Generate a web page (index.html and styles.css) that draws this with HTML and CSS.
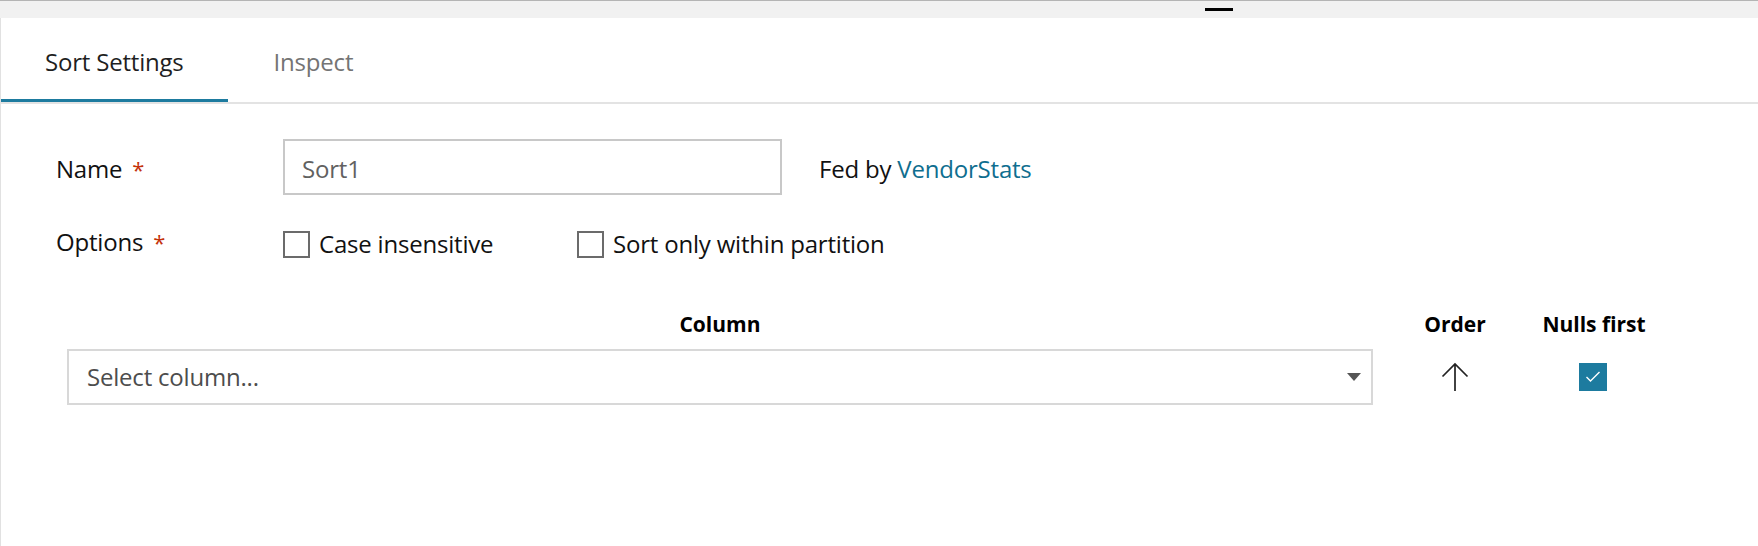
FILE: index.html
```html
<!DOCTYPE html>
<html lang="en">
<head>
<meta charset="utf-8">
<title>Sort Settings</title>
<link rel="stylesheet" href="styles.css">
</head>
<body>
<div class="page">
  <div class="topbar"><span class="handle"></span></div>
  <div class="main">
    <div class="tabs">
      <div class="tab active">Sort Settings</div>
      <div class="tab">Inspect</div>
    </div>
    <div class="form">
      <div class="row row-name">
        <div class="label">Name<span class="req">*</span></div>
        <div class="input">Sort1</div>
        <div class="fed">Fed by <span class="link">VendorStats</span></div>
      </div>
      <div class="row row-options">
        <div class="label label-options">Options<span class="req">*</span></div>
        <div class="options">
          <div class="opt opt-first"><span class="box"></span><span>Case insensitive</span></div>
          <div class="opt"><span class="box"></span><span>Sort only within partition</span></div>
        </div>
      </div>
      <div class="table">
        <div class="th">Column</div>
        <div class="th">Order</div>
        <div class="th">Nulls first</div>
        <div class="select">
          <span>Select column...</span>
          <svg class="caret" width="14" height="8" viewBox="0 0 14 8"><path d="M0 0 H14 L7 8 Z" fill="#555"/></svg>
        </div>
        <div class="cell">
          <svg width="28" height="30" viewBox="0 0 28 30"><path d="M14 29 V2 M1.5 14.5 L14 2 L26.5 14.5" fill="none" stroke="#222" stroke-width="1.7"/></svg>
        </div>
        <div class="cell">
          <span class="checked"><svg width="28" height="28" viewBox="0 0 28 28"><path d="M7.5 14 L11.5 18 L20.5 9" fill="none" stroke="#fff" stroke-width="1.4"/></svg></span>
        </div>
      </div>
    </div>
  </div>
</div>
</body>
</html>
```

FILE: styles.css
```css
* { box-sizing: border-box; }
html, body { margin: 0; padding: 0; background: #fff; }
body {
  font-family: "Open Sans", "Noto Sans", "Liberation Sans", sans-serif;
  color: #111;
  font-size: 24px;
  line-height: 32px;
  letter-spacing: -0.2px;
}
.page {
  width: 1758px;
  height: 546px;
  border-top: 1px solid #b4b4b4;
  display: flex;
  flex-direction: column;
}
.topbar {
  height: 17px;
  background: #f1f1f1;
  padding: 7px 0 0 1205px;
  display: flex;
  align-items: flex-start;
}
.handle {
  display: block;
  width: 28px;
  height: 3px;
  background: #000;
}
.main {
  flex: 1;
  border-left: 1px solid #e1e1e1;
}
.tabs {
  display: flex;
  border-bottom: 2px solid #e3e3e3;
}
.tab {
  padding: 28px 44px 21px 44px;
  border-bottom: 3px solid transparent;
  color: #747474;
}
.tab.active {
  color: #1f1f1f;
  border-bottom-color: #1d7b9f;
}
.tab + .tab { margin-left: 2px; }
.form {
  padding-left: 55px;
}
.row {
  display: flex;
}
.row-name {
  margin-top: 35px;
  align-items: baseline;
}
.label {
  width: 227px;
  flex: none;
  color: #111;
}
.req {
  color: #c4320a;
  font-size: 22px;
  margin-left: 10px;
}
.input {
  width: 499px;
  height: 56px;
  border: 2px solid #c8c8c8;
  padding: 12px 17px 8px 17px;
  color: #616161;
}
.fed {
  margin-left: 37px;
  color: #111;
}
.link {
  color: #0f6e8f;
}
.row-options {
  margin-top: 33px;
  align-items: flex-start;
}
.label-options {
  margin-top: -2px;
}
.options {
  display: flex;
}
.opt {
  display: flex;
  align-items: center;
  gap: 9px;
  color: #111;
}
.opt-first {
  width: 294px;
}
.box {
  width: 27px;
  height: 27px;
  border: 2px solid #6b6b6b;
  flex: none;
}
.table {
  margin-top: 50px;
  margin-left: 11px;
  display: grid;
  grid-template-columns: 1306px 164px 114px;
  row-gap: 11px;
}
.th {
  font-weight: 700;
  font-size: 21px;
  line-height: 28px;
  text-align: center;
  color: #000;
  letter-spacing: 0;
}
.select {
  height: 56px;
  border: 2px solid #d8d8d8;
  padding: 0 10px 0 18px;
  display: flex;
  align-items: center;
  justify-content: space-between;
  color: #4d4d4d;
}
.caret { display: block; }
.cell {
  display: flex;
  align-items: center;
  justify-content: center;
}
.cell svg { display: block; }
.checked {
  display: block;
  width: 28px;
  height: 28px;
  background: #1d7b9f;
  margin-left: -2px;
}
```
